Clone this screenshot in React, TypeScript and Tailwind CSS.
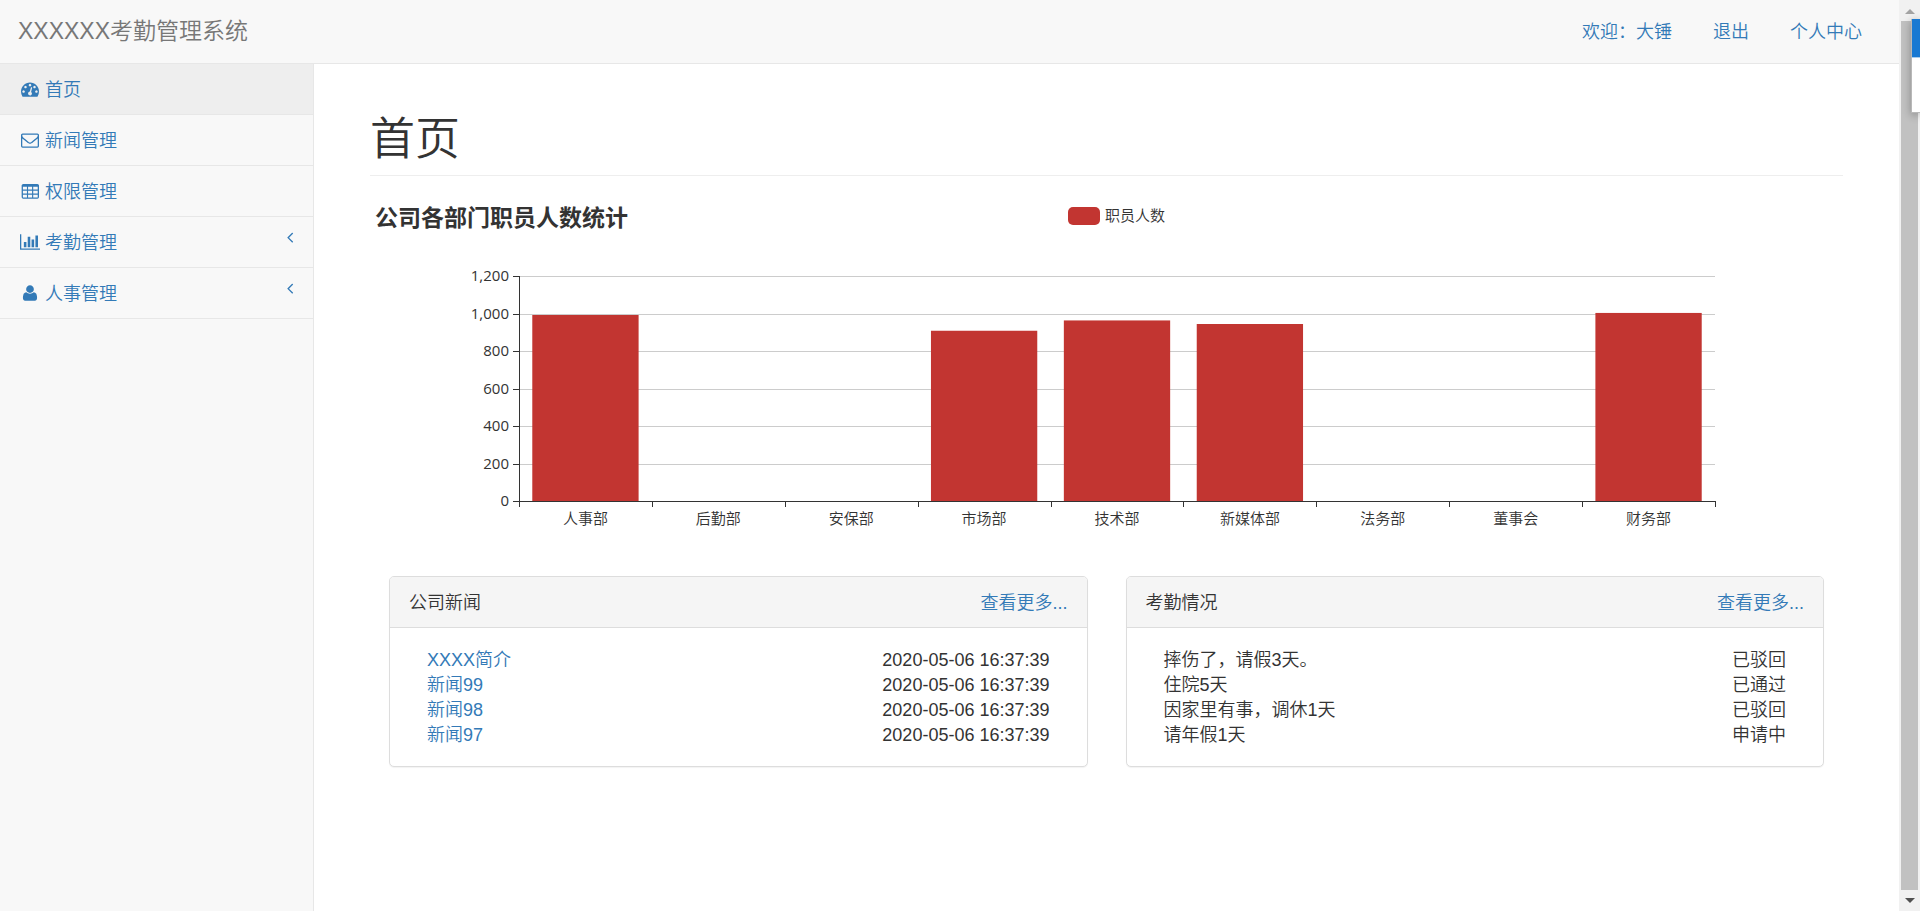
import React from "react";

type IconProps = { className?: string };

const DashboardIcon = ({ className = "" }: IconProps) => (
  <svg viewBox="0 0 1792 1792" fill="currentColor" aria-hidden="true" className={className}>
    <path d="M384 1152q0-53-37.5-90.5t-90.5-37.5-90.5 37.5-37.5 90.5 37.5 90.5 90.5 37.5 90.5-37.5 37.5-90.5zm192-448q0-53-37.5-90.5t-90.5-37.5-90.5 37.5-37.5 90.5 37.5 90.5 90.5 37.5 90.5-37.5 37.5-90.5zm428 481l101-382q6-26-7.5-48.5t-38.5-29.5-48 6.5-30 39.5l-101 382q-60 5-107 43.5t-63 98.5q-20 77 20 146t117 89 146-20 89-117q16-60-6-117t-72-91zm660-33q0-53-37.5-90.5t-90.5-37.5-90.5 37.5-37.5 90.5 37.5 90.5 90.5 37.5 90.5-37.5 37.5-90.5zm-640-640q0-53-37.5-90.5t-90.5-37.5-90.5 37.5-37.5 90.5 37.5 90.5 90.5 37.5 90.5-37.5 37.5-90.5zm448 192q0-53-37.5-90.5t-90.5-37.5-90.5 37.5-37.5 90.5 37.5 90.5 90.5 37.5 90.5-37.5 37.5-90.5zm320 448q0 261-141 483-19 29-54 29h-1402q-35 0-54-29-141-221-141-483 0-182 71-348t191-286 286-191 348-71 348 71 286 191 191 286 71 348z" />
  </svg>
);

const EnvelopeIcon = ({ className = "" }: IconProps) => (
  <svg viewBox="0 0 1792 1792" fill="currentColor" aria-hidden="true" className={className}>
    <path d="M1664 1504v-768q-32 36-69 66-268 206-426 338-51 43-83 67t-86.5 48.5-102.5 24.5h-2q-48 0-102.5-24.5t-86.5-48.5-83-67q-158-132-426-338-37-30-69-66v768q0 13 9.5 22.5t22.5 9.5h1472q13 0 22.5-9.5t9.5-22.5zm0-1051v-24.5l-.5-13-3-12.5-5.5-9-9-7.5-14-2.5h-1472q-13 0-22.5 9.5t-9.5 22.5q0 168 147 284 193 152 401 317 6 5 35 29.5t46 37.5 44.5 31.5 50.5 27.5 43 9h2q20 0 43-9t50.5-27.5 44.5-31.5 46-37.5 35-29.5q208-165 401-317 54-43 100.5-115.5t46.5-131.5zm128-37v1088q0 66-47 113t-113 47h-1472q-66 0-113-47t-47-113v-1088q0-66 47-113t113-47h1472q66 0 113 47t47 113z" />
  </svg>
);

const TableIcon = ({ className = "" }: IconProps) => (
  <svg viewBox="0 0 1792 1792" fill="currentColor" fillRule="evenodd" aria-hidden="true" className={className}>
    <path d="M224 192h1408q66 0 113 47t47 113v1152q0 66-47 113t-113 47h-1408q-66 0-113-47t-47-113v-1152q0-66 47-113t113-47zM192 464h400v288h-400zM704 464h400v288h-400zM1216 464h448v288h-448zM192 864h400v288h-400zM704 864h400v288h-400zM1216 864h448v288h-448zM192 1264h400v288h-400zM704 1264h400v288h-400zM1216 1264h448v288h-448z" />
  </svg>
);

const BarChartIcon = ({ className = "" }: IconProps) => (
  <svg viewBox="0 0 2048 1792" fill="currentColor" aria-hidden="true" className={className}>
    <path d="M640 896v512h-256v-512h256zm384-512v1024h-256v-1024h256zm1024 1152v128h-2048v-1536h128v1408h1920zm-640-896v768h-256v-768h256zm384-384v1152h-256v-1152h256z" />
  </svg>
);

const UserIcon = ({ className = "" }: IconProps) => (
  <svg viewBox="0 0 1792 1792" fill="currentColor" aria-hidden="true" className={className}>
    <path d="M1600 1399q0 109-62.5 187t-150.5 78h-982q-88 0-150.5-78t-62.5-187q0-85 8.5-160.5t31.5-152 58.5-131 94-89 134.5-34.5q155 128 377 128t377-128q76 0 134.5 34.5t94 89 58.5 131 31.5 152 8.5 160.5zm-320-887q0 159-112.5 271.5t-271.5 112.5-271.5-112.5-112.5-271.5 112.5-271.5 271.5-112.5 271.5 112.5 112.5 271.5z" />
  </svg>
);

const AngleLeftIcon = ({ className = "" }: IconProps) => (
  <svg viewBox="0 0 1792 1792" fill="currentColor" aria-hidden="true" className={className}>
    <path d="M1203 544q0 13-10 23l-393 393 393 393q10 10 10 23t-10 23l-50 50q-10 10-23 10t-23-10l-466-466q-10-10-10-23t10-23l466-466q10-10 23-10t23 10l50 50q10 10 10 23z" />
  </svg>
);

const navItems = [
  { label: "首页", Icon: DashboardIcon, active: true, expandable: false },
  { label: "新闻管理", Icon: EnvelopeIcon, active: false, expandable: false },
  { label: "权限管理", Icon: TableIcon, active: false, expandable: false },
  { label: "考勤管理", Icon: BarChartIcon, active: false, expandable: true },
  { label: "人事管理", Icon: UserIcon, active: false, expandable: true },
];

const departments = [
  { name: "人事部", count: 992 },
  { name: "后勤部", count: 0 },
  { name: "安保部", count: 0 },
  { name: "市场部", count: 908 },
  { name: "技术部", count: 963 },
  { name: "新媒体部", count: 944 },
  { name: "法务部", count: 0 },
  { name: "董事会", count: 0 },
  { name: "财务部", count: 1003 },
];

const yTicks = [0, 200, 400, 600, 800, 1000, 1200];

const news = [
  { title: "XXXX简介", time: "2020-05-06 16:37:39" },
  { title: "新闻99", time: "2020-05-06 16:37:39" },
  { title: "新闻98", time: "2020-05-06 16:37:39" },
  { title: "新闻97", time: "2020-05-06 16:37:39" },
];

const leaves = [
  { reason: "摔伤了，请假3天。", status: "已驳回" },
  { reason: "住院5天", status: "已通过" },
  { reason: "因家里有事，调休1天", status: "已驳回" },
  { reason: "请年假1天", status: "申请中" },
];

const AXIS_LEFT = 149;
const AXIS_RIGHT = 1345;
const AXIS_TOP = 75;
const AXIS_BOTTOM = 300;
const MAX_VALUE = 1200;

function StaffChart() {
  const slot = (AXIS_RIGHT - AXIS_LEFT) / departments.length;
  const barWidth = slot * 0.8;
  const yOf = (v: number) =>
    AXIS_BOTTOM - (v / MAX_VALUE) * (AXIS_BOTTOM - AXIS_TOP);

  return (
    <svg
      viewBox="0 0 1473 375"
      role="img"
      aria-label="公司各部门职员人数统计"
      className="block h-auto w-full font-['Open_Sans','Noto_Sans_CJK_SC',sans-serif]"
    >
      <text x="5" y="25" fontSize="23" fontWeight="700" fill="#333">
        公司各部门职员人数统计
      </text>
      <rect x="698" y="6" width="32" height="18" rx="5" fill="#c23531" />
      <text x="735" y="20" fontSize="15" fontWeight="350" fill="#333">
        职员人数
      </text>

      {yTicks.map((v) => {
        const y = Math.round(yOf(v)) + 0.5;
        return (
          <g key={v}>
            {v > 0 && (
              <line x1={AXIS_LEFT} x2={AXIS_RIGHT} y1={y} y2={y} stroke="#ccc" />
            )}
            <line x1={AXIS_LEFT - 6} x2={AXIS_LEFT} y1={y} y2={y} stroke="#333" />
            <text
              x={AXIS_LEFT - 10}
              y={Math.round(yOf(v)) + 5}
              fontSize="15"
              fontWeight="400"
              fill="#333"
              textAnchor="end"
            >
              {v.toLocaleString("en-US")}
            </text>
          </g>
        );
      })}

      {departments.map((d, i) => (
        <g key={d.name}>
          {d.count > 0 && (
            <rect
              x={AXIS_LEFT + slot * i + (slot - barWidth) / 2}
              y={yOf(d.count)}
              width={barWidth}
              height={AXIS_BOTTOM - yOf(d.count)}
              fill="#c23531"
            />
          )}
          <text
            x={AXIS_LEFT + slot * (i + 0.5)}
            y="323"
            fontSize="15"
            fontWeight="350"
            fill="#333"
            textAnchor="middle"
          >
            {d.name}
          </text>
        </g>
      ))}

      <path
        d={`M${AXIS_LEFT + 0.5} ${AXIS_TOP}V${AXIS_BOTTOM}M${AXIS_LEFT} ${AXIS_BOTTOM + 0.5}H${AXIS_RIGHT + 1}`}
        stroke="#333"
        fill="none"
      />
      {Array.from({ length: departments.length + 1 }, (_, i) => {
        const x = Math.round(AXIS_LEFT + slot * i) + 0.5;
        return (
          <line key={i} x1={x} x2={x} y1={AXIS_BOTTOM} y2={AXIS_BOTTOM + 6} stroke="#333" />
        );
      })}
    </svg>
  );
}

function Panel({ title, children }: { title: string; children: React.ReactNode }) {
  return (
    <section className="rounded-[5px] border border-[#ddd] bg-white shadow-[0_1px_1px_rgba(0,0,0,0.05)]">
      <div className="flex h-[51px] items-center justify-between rounded-t-[4px] border-b border-[#ddd] bg-[#f5f5f5] px-[19px] pt-[2px]">
        <h2>{title}</h2>
        <a href="#more" className="text-[#337ab7]">
          查看更多...
        </a>
      </div>
      <ul className="px-[37px] pt-[20px] pb-[18px] leading-[25px]">{children}</ul>
    </section>
  );
}

function ScrollRail() {
  return (
    <div aria-hidden="true" className="relative w-[21px] shrink-0 overflow-hidden bg-[#f1f1f1]">
      <div className="flex h-full flex-col items-center">
        <div className="flex h-[21px] shrink-0 items-center">
          <svg viewBox="0 0 10 5" className="mt-[2px] h-[5px] w-[10px]">
            <path d="M5 0L10 5H0z" fill="#a3a3a3" />
          </svg>
        </div>
        <div className="w-[17px] flex-1 bg-[#c1c1c1]" />
        <div className="flex h-[21px] shrink-0 items-center">
          <svg viewBox="0 0 10 5" className="h-[5px] w-[10px]">
            <path d="M0 0H10L5 5z" fill="#505050" />
          </svg>
        </div>
      </div>
      <div className="absolute top-[19px] right-0 h-[94px] w-[9px] border-b border-l border-[#b8b8b8] bg-white shadow-[0_2px_9px_rgba(0,0,0,0.3)]">
        <div className="h-[39px] border-b border-[#a9cdee] bg-[#1979d2]" />
      </div>
    </div>
  );
}

export default function App() {
  return (
    <div className="flex min-h-screen bg-white font-['Liberation_Sans','Noto_Sans_CJK_SC',sans-serif] text-lg leading-[25px] font-[350] text-[#333]">
      <div className="flex min-w-0 flex-1 flex-col">
        <header className="flex h-16 items-center justify-between border-b border-[#e7e7e7] bg-[#f8f8f8] pt-[1px] pr-[37px] pl-[18px]">
          <a href="#home" className="pb-[2px] text-[23px] text-[#777]">
            XXXXXX考勤管理系统
          </a>
          <nav className="flex gap-[41px] text-[#337ab7]">
            <a href="#welcome">欢迎：大锤</a>
            <a href="#logout">退出</a>
            <a href="#profile">个人中心</a>
          </nav>
        </header>

        <div className="flex flex-1">
          <aside className="w-[314px] shrink-0 border-r border-[#e7e7e7] bg-[#f8f8f8]">
            <ul>
              {navItems.map(({ label, Icon, active, expandable }) => (
                <li key={label} className="border-b border-[#e7e7e7]">
                  <a
                    href={`#${label}`}
                    className={`flex h-[50px] items-center pr-[14px] pl-[18px] text-[#337ab7] ${
                      active ? "bg-[#eee]" : ""
                    }`}
                  >
                    <span className="mr-[3px] flex w-[24px] justify-center">
                      <Icon className="h-[18px] w-auto max-w-none" />
                    </span>
                    <span className="pt-[2px]">{label}</span>
                    {expandable && (
                      <AngleLeftIcon className="mb-[10px] ml-auto size-[18px]" />
                    )}
                  </a>
                </li>
              ))}
            </ul>
          </aside>

          <main className="min-w-0 flex-1 px-[56px] pt-[51px]">
            <h1 className="border-b border-[#eee] pb-[10px] text-[45px] leading-[50px]">首页</h1>
            <div className="pt-[25px]">
              <StaffChart />
            </div>
            <div className="grid grid-cols-2 gap-[38px] px-[19px]">
              <Panel title="公司新闻">
                {news.map((n) => (
                  <li key={n.title} className="flex justify-between">
                    <a href={`#${n.title}`} className="text-[#337ab7]">
                      {n.title}
                    </a>
                    <span>{n.time}</span>
                  </li>
                ))}
              </Panel>
              <Panel title="考勤情况">
                {leaves.map((l) => (
                  <li key={l.reason} className="flex justify-between">
                    <span>{l.reason}</span>
                    <span>{l.status}</span>
                  </li>
                ))}
              </Panel>
            </div>
          </main>
        </div>
      </div>
      <ScrollRail />
    </div>
  );
}
